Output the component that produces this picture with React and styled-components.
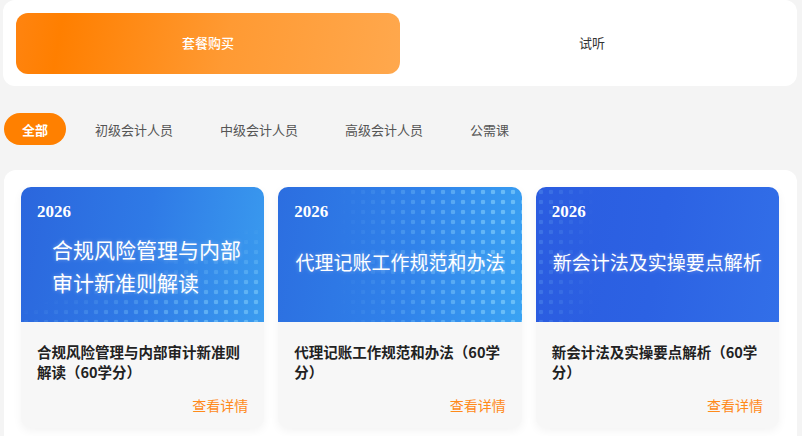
import React from "react";
import styled, { createGlobalStyle } from "styled-components";

const Global = createGlobalStyle`
  html, body { margin: 0; padding: 0; background: #f4f4f4; }
  body { font-family: "Noto Sans CJK SC", "Noto Sans", sans-serif; }
  * { box-sizing: border-box; }
`;

const Page = styled.div`
  padding: 0 5px 0 3px;
  display: flex;
  flex-direction: column;
`;

const TopPanel = styled.div`
  background: #fff;
  border-radius: 12px;
  height: 86px;
  padding: 13px 13px 12px 13px;
  display: grid;
  grid-template-columns: 384px 1fr;
`;

const BuyButton = styled.div`
  border-radius: 12px;
  background: linear-gradient(100deg, #ff8410 0%, #ff7f00 12%, #ff9a33 55%, #ffa84d 100%);
  color: #fff;
  font-size: 13px;
  font-weight: 500;
  display: flex;
  align-items: center;
  justify-content: center;
  padding-bottom: 3px;
`;

const ListenButton = styled.div`
  color: #333;
  font-size: 13px;
  display: flex;
  align-items: center;
  justify-content: center;
  padding-bottom: 3px;
`;

const Tabs = styled.div`
  display: flex;
  gap: 11px;
  margin: 27px 0 0 1px;
  height: 32px;
`;

const Tab = styled.div`
  padding: 0 18px;
  border-radius: 16px;
  display: flex;
  align-items: center;
  font-size: 13px;
  color: ${(p) => (p.$active ? "#fff" : "#555")};
  background: ${(p) => (p.$active ? "#ff8000" : "transparent")};
  font-weight: ${(p) => (p.$active ? 700 : 400)};
`;

const Panel = styled.div`
  margin: 25px 0 0 1px;
  background: #fff;
  border-radius: 12px 12px 0 0;
  padding: 17px 18px 17px 17px;
  display: grid;
  grid-template-columns: repeat(3, 1fr);
  gap: 14px;
`;

const Card = styled.div`
  border-radius: 10px;
  overflow: hidden;
  background: #f7f7f7;
  box-shadow: 0 3px 10px rgba(0, 0, 0, 0.05);
  display: flex;
  flex-direction: column;
`;

const Cover = styled.div`
  position: relative;
  height: 135px;
  background: ${(p) => p.$bg};
  padding: 15px 16px 0 16px;
  color: #fff;
  overflow: hidden;
  &::after {
    content: "";
    position: absolute;
    inset: 0;
    background-image: radial-gradient(circle, rgba(150, 220, 255, 0.55) 2px, transparent 2.6px);
    background-size: 10px 10px;
    -webkit-mask-image: ${(p) => p.$mask};
    mask-image: ${(p) => p.$mask};
    pointer-events: none;
  }
`;

const Year = styled.div`
  position: relative;
  z-index: 1;
  font-family: "Liberation Serif", "DejaVu Serif", serif;
  font-weight: 700;
  font-size: 17px;
  line-height: 20px;
`;

const CoverTitle = styled.div`
  position: relative;
  z-index: 1;
  font-size: ${(p) => p.$size}px;
  line-height: 33px;
  margin-top: ${(p) => p.$top}px;
  padding-left: ${(p) => p.$indent}px;
  text-align: ${(p) => p.$align};
  white-space: nowrap;
  text-shadow: 0 0 4px rgba(255, 255, 255, 0.35);
`;

const Body = styled.div`
  height: 106px;
  padding: 20px 16px 14px 16px;
  display: flex;
  flex-direction: column;
`;

const Name = styled.div`
  font-size: 14.5px;
  font-weight: 700;
  color: #222;
  line-height: 20px;
`;

const Detail = styled.div`
  margin-top: auto;
  align-self: flex-end;
  color: #ff8a1a;
  font-size: 14px;
  line-height: 18px;
`;

const tabs = ["全部", "初级会计人员", "中级会计人员", "高级会计人员", "公需课"];

const cards = [
  {
    lines: ["合规风险管理与内部", "审计新准则解读"],
    size: 21,
    top: 11,
    indent: 15,
    align: "left",
    bg: "linear-gradient(100deg, #2b66dd 0%, #2f7ae6 50%, #3a9cef 100%)",
    mask: "linear-gradient(160deg, transparent 55%, rgba(0,0,0,0.8) 85%)",
    name: "合规风险管理与内部审计新准则解读（60学分）",
  },
  {
    lines: ["代理记账工作规范和办法"],
    size: 19,
    top: 23,
    indent: 0,
    align: "center",
    bg: "linear-gradient(100deg, #2c6ee0 0%, #3082ea 55%, #3aa3f3 100%)",
    mask: "linear-gradient(90deg, transparent 25%, rgba(0,0,0,0.95) 90%)",
    name: "代理记账工作规范和办法（60学分）",
  },
  {
    lines: ["新会计法及实操要点解析"],
    size: 19,
    top: 23,
    indent: 0,
    align: "center",
    bg: "linear-gradient(100deg, #2b5ce0 0%, #2c62e3 50%, #326fe8 100%)",
    mask: "linear-gradient(90deg, rgba(0,0,0,0.35) 0%, transparent 25%)",
    name: "新会计法及实操要点解析（60学分）",
  },
];

export default function App() {
  return (
    <>
      <Global />
      <Page>
        <TopPanel>
          <BuyButton>套餐购买</BuyButton>
          <ListenButton>试听</ListenButton>
        </TopPanel>
        <Tabs>
          {tabs.map((t, i) => (
            <Tab key={t} $active={i === 0}>
              {t}
            </Tab>
          ))}
        </Tabs>
        <Panel>
          {cards.map((c) => (
            <Card key={c.name}>
              <Cover $bg={c.bg} $mask={c.mask}>
                <Year>2026</Year>
                <CoverTitle
                  $size={c.size}
                  $top={c.top}
                  $indent={c.indent}
                  $align={c.align}
                >
                  {c.lines.map((l) => (
                    <div key={l}>{l}</div>
                  ))}
                </CoverTitle>
              </Cover>
              <Body>
                <Name>{c.name}</Name>
                <Detail>查看详情</Detail>
              </Body>
            </Card>
          ))}
        </Panel>
      </Page>
    </>
  );
}
